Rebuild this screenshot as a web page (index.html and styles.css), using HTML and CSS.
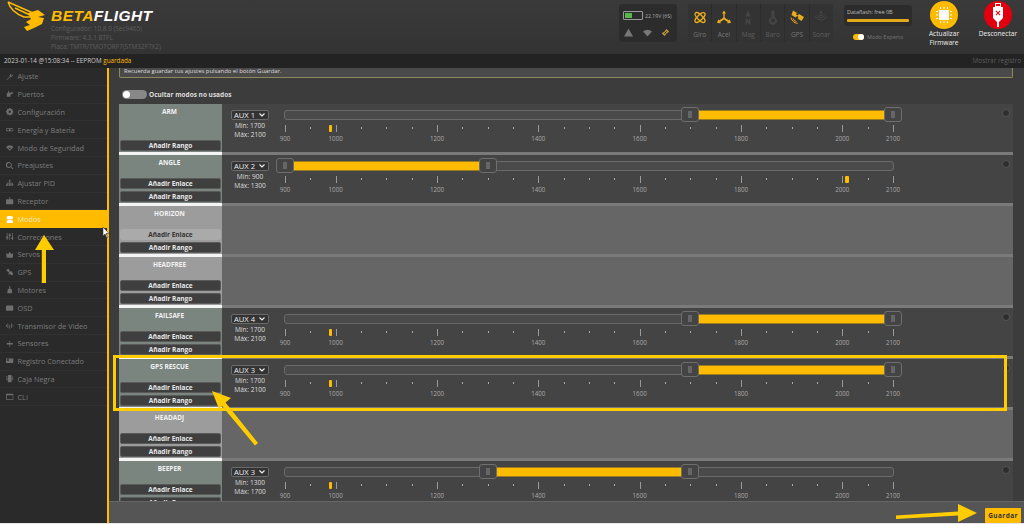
FILE: index.html
```html
<!DOCTYPE html>
<html lang="es">
<head>
  <meta charset="utf-8">
  <title>Betaflight - Modos</title>
  <link rel="stylesheet" href="styles.css">
</head>
<body>

<svg class="defs" width="0" height="0">
  <symbol id="i-wrench" viewBox="0 0 10 10"><path d="M1 9.500 .5 9 5 4.500C4.600 3 5.600 1 8 1L6.600 2.600 7.600 3.600 9.400 2C9.500 4.400 7.400 5.600 5.800 5.200Z"/></symbol>
  <symbol id="i-ports" viewBox="0 0 10 10"><path d="M1 9V5L3 3V1H4V3L6 4 9 2V5L6 6V9Z"/></symbol>
  <symbol id="i-gear" viewBox="0 0 10 10"><path fill-rule="evenodd" d="M4 0H6L6.300 1.500 7.700 .9 9.100 2.300 8.500 3.700 10 4V6L8.500 6.300 9.100 7.700 7.700 9.100 6.300 8.500 6 10H4L3.700 8.500 2.300 9.100.9 7.700 1.500 6.300 0 6V4L1.500 3.700.9 2.300 2.300.9 3.700 1.500ZM5 3.400A1.600 1.600 0 1 0 5 6.600 1.600 1.600 0 1 0 5 3.400Z"/></symbol>
  <symbol id="i-batt" viewBox="0 0 10 10"><path fill-rule="evenodd" d="M1 3H9Q10 3 10 4V6Q10 7 9 7H1Q0 7 0 6V4Q0 3 1 3ZM1 4V6H4V4ZM6 4V6H9V4Z"/></symbol>
  <symbol id="i-para" viewBox="0 0 10 10"><path d="M0 4Q5-1 10 4L5 9ZM3 5 5 7 7 5Z"/></symbol>
  <symbol id="i-preset" viewBox="0 0 10 10"><path fill-rule="evenodd" d="M4 0A4 4 0 0 1 7 6.300L10 9 9 10 6.200 7A4 4 0 1 1 4 0ZM4 1.400A2.600 2.600 0 1 0 4 6.600 2.600 2.600 0 1 0 4 1.400Z"/></symbol>
  <symbol id="i-pid" viewBox="0 0 10 10"><path d="M4 1H6V3H5.500V5H9V7H10V9H7V7H8V6H5.500V7H6.500V9H3.500V7H4.500V6H2V7H3V9H0V7H1V5H4.500V3H4Z"/></symbol>
  <symbol id="i-rx" viewBox="0 0 10 10"><path d="M4.500 0H5.500V3H9Q10 3 10 4V9Q10 10 9 10H1Q0 10 0 9V4Q0 3 1 3H4.500Z"/></symbol>
  <symbol id="i-modes" viewBox="0 0 10 10"><path fill-rule="evenodd" d="M3 0H7A2.300 2.300 0 0 1 7 4.600H3A2.300 2.300 0 0 1 3 0ZM3 5.400H7A2.300 2.300 0 0 1 7 10H3A2.300 2.300 0 0 1 3 5.400Z"/></symbol>
  <symbol id="i-sliders" viewBox="0 0 10 10"><path d="M1 0H2V5H3V7H2V10H1V7H0V5H1ZM4.500 0H5.500V2H6.500V4H5.500V10H4.500V4H3.500V2H4.500ZM8 0H9V6H10V8H9V10H8V8H7V6H8Z"/></symbol>
  <symbol id="i-servo" viewBox="0 0 10 10"><path d="M0 3 3 4 5 1 7 4 10 3 9 9H1Z"/></symbol>
  <symbol id="i-gps" viewBox="0 0 10 10"><path d="M0 3 3 1 5 3 4 5 7 4 10 8 8 10 5 8 3 9 4 6Z"/></symbol>
  <symbol id="i-motor" viewBox="0 0 10 10"><path d="M4.500 0H5.500L6 4H7.500L8.500 10H1.500L2.500 4H4Z"/></symbol>
  <symbol id="i-osd" viewBox="0 0 10 10"><path d="M1 2H9Q10 2 10 3V8Q10 9 9 9H1Q0 9 0 8V3Q0 2 1 2Z"/></symbol>
  <symbol id="i-vtx" viewBox="0 0 10 10"><path d="M4.500 4H5.500V9H4.500ZM2 2H3V8H2ZM7 2H8V8H7ZM0 3.500H1V6.500H0ZM9 3.500H10V6.500H9Z"/></symbol>
  <symbol id="i-sensor" viewBox="0 0 10 10"><path d="M4.500 1H5.500V4H9V6H5.500V9H4.500V6H1V4H4.500Z"/></symbol>
  <symbol id="i-log" viewBox="0 0 10 10"><path fill-rule="evenodd" d="M0 2H10V8H0ZM1 3V5H4V3Z"/></symbol>
  <symbol id="i-box" viewBox="0 0 10 10"><path d="M2.500 0H7.500V10H2.500ZM0 2H2V3H0ZM0 4H2V5H0ZM0 6H2V7H0ZM8 2H10V3H8ZM8 4H10V5H8ZM8 6H10V7H8Z"/></symbol>
  <symbol id="i-cli" viewBox="0 0 10 10"><path fill-rule="evenodd" d="M0 1H10V9H0ZM1 3V8H9V3Z"/></symbol>
</svg>

<header class="topbar">
  <div class="brand">
    <svg class="logo" viewBox="0 0 46 32">
      <path class="wing" d="M1 1 26 12 M1 1Q4 11 17 16L24 16 M8 7 23 14"/>
      <path class="wasp" d="M21 12 31 9 38 14 31 16 37 17 35 23 27 27 20 30 17 26 23 24 19 21 24 18Z"/>
    </svg>
    <div class="brand-text">
      <div class="wordmark"><span>BETA</span>FLIGHT</div>
      <div class="version">Configurador: 10.8.0 (Sec9465)</div>
      <div class="version">Firmware: 4.3.1 BTFL</div>
      <div class="version">Placa: TMTR/TMOTORF7(STM32F7X2)</div>
    </div>
  </div>

  <div class="status">
    <div class="batt-line">
      <div class="batt"><div class="batt-fill"></div></div>
      <span>22.19V (6S)</span>
    </div>
    <div class="status-icons">
      <svg viewBox="0 0 10 10" class="dim"><path d="M5 .5 10 9.500H0Z"/></svg>
      <svg viewBox="0 0 10 10" class="dim"><path d="M0 4Q5 0 10 4L5 9.500Z"/></svg>
      <svg viewBox="0 0 10 10" class="on"><path d="M6 1 9 4 7.500 5.500 6.500 4.500 7 4 6 3 4 5 5 6 4.500 6.500 3 5ZM4 9 1 6 2.500 4.500 3.500 5.500 3 6 4 7 6 5 5 4 5.500 3.500 7 5Z"/></svg>
    </div>
  </div>

  <div class="sensors">
    <div class="sensor on">
      <svg viewBox="0 0 14 14"><g fill="none" stroke="currentColor" stroke-width="1.400"><ellipse cx="7" cy="7" rx="2.600" ry="6.400" transform="rotate(45 7 7)"/><ellipse cx="7" cy="7" rx="2.600" ry="6.400" transform="rotate(-45 7 7)"/></g></svg>
      <span>Giro</span>
    </div>
    <div class="sensor on">
      <svg viewBox="0 0 14 14"><path d="M7 0 9 3H7.700V7.300L12 10 12.700 8.800 14 12.500 10 12.800 10.800 11.500 7 9 3.200 11.500 4 12.800 0 12.500 1.300 8.800 2 10 6.300 7.300V3H5Z"/></svg>
      <span>Acel</span>
    </div>
    <div class="sensor">
      <svg viewBox="0 0 14 14"><path d="M7 0 9.500 6H4.500ZM4.500 8H6L8 11V8H9.500V14H8L6 11V14H4.500Z"/></svg>
      <span>Mag</span>
    </div>
    <div class="sensor">
      <svg viewBox="0 0 14 14"><path fill-rule="evenodd" d="M5.500 0H8.500V6.500A4 4 0 1 1 5.500 6.500ZM7 8A2 2 0 1 0 7 12 2 2 0 1 0 7 8Z"/></svg>
      <span>Baro</span>
    </div>
    <div class="sensor on">
      <svg viewBox="0 0 14 14"><path d="M3 0 7 2.500 6 4 7.500 5 9 3.500 14 6.500 11.500 10.500 7.500 8 8.500 6.500 7 5.500 5.500 7 1.500 4.500Z"/><g fill="none" stroke="currentColor" stroke-width="1"><path d="M1 7Q2 12 7.500 13"/><path d="M3 8Q3.500 10.500 6.500 11"/></g></svg>
      <span>GPS</span>
    </div>
    <div class="sensor">
      <svg viewBox="0 0 14 14"><g fill="none" stroke="currentColor" stroke-width="1.100"><path d="M1 6Q7 13 13 6"/><path d="M3 5Q7 9.500 11 5"/><path d="M5 4Q7 6 9 4"/></g><circle cx="7" cy="2" r="1.200"/></svg>
      <span>Sonar</span>
    </div>
  </div>

  <div class="flash-col">
    <div class="flash">
      <div>Dataflash: free 0B</div>
      <div class="flash-bar"></div>
    </div>
    <div class="expert"><span class="mini-toggle"></span>Modo Experto</div>
  </div>

  <div class="action">
    <div class="action-icon yellow">
      <svg viewBox="0 0 16 16"><path d="M3 3H13V13H3ZM4 0H5V2H4ZM7.500 0H8.500V2H7.500ZM11 0H12V2H11ZM4 14H5V16H4ZM7.500 14H8.500V16H7.500ZM11 14H12V16H11ZM0 4H2V5H0ZM0 7.500H2V8.500H0ZM0 11H2V12H0ZM14 4H16V5H14ZM14 7.500H16V8.500H14ZM14 11H16V12H14Z"/></svg>
    </div>
    <span>Actualizar<br>Firmware</span>
  </div>
  <div class="action">
    <div class="action-icon red">
      <svg viewBox="0 0 12 24"><path fill-rule="evenodd" d="M3 0H9V4H11V15L7 19V24H5V19L1 15V4H3ZM4 1V3H8V1ZM4.200 7.500 3.500 8.200 5.300 10 3.500 11.800 4.200 12.500 6 10.700 7.800 12.500 8.500 11.800 6.700 10 8.500 8.200 7.800 7.500 6 9.300Z"/></svg>
    </div>
    <span>Desconectar</span>
  </div>
</header>

<div class="logbar">
  <div>2023-01-14 @15:08:34 -- EEPROM <span class="saved">guardada</span></div>
  <div class="showlog">Mostrar registro</div>
</div>

<div class="main">
  <nav class="sidebar" id="sidebar"></nav>

  <section class="content">
    <div class="scroll">
      <div class="note">Recuerda guardar tus ajustes pulsando el botón Guardar.</div>
      <div class="hide-unused"><span class="toggle"></span>Ocultar modos no usados</div>
      <div class="modes" id="modes"></div>
    </div>
    <footer class="toolbar"><a class="save">Guardar</a></footer>
  </section>
</div>

<div class="mark-box"></div>
<svg class="marks" width="1024" height="524" viewBox="0 0 1024 524">
  <path class="cursor" d="M103 227V236L105 234 107 238 108 237 106 233.500 109 233.500Z"/>
  <path d="M41.800 283V250H35L44 235 54 250H46V283Z"/>
  <path d="M212 391 231 398 225.500 402.500 258 443 255 445.500 222 406 219 409Z"/>
  <path d="M896 515.500 958 511.500V504L977 513 958 522V515.500L896 519Z"/>
</svg>

<script src="script.js"></script>
</body>
</html>
```

FILE: styles.css
```css
* {
  box-sizing: border-box;
}

html, body {
  margin: 0;
  height: 524px;
  overflow: hidden;
}

body {
  position: relative;
  display: flex;
  flex-direction: column;
  background: #2a2a2a;
  font-family: "Open Sans", sans-serif;
  border-bottom: 1px solid #e8e8e8;
}

.defs {
  position: absolute;
}

/* header */

.topbar {
  height: 54px;
  flex: none;
  display: flex;
  background: linear-gradient(#3a3a3a, #333);
}

.brand {
  display: flex;
  width: 619px;
  flex: none;
  padding: 1px 0 0 7px;
}

.logo {
  width: 46px;
  height: 32px;
  flex: none;
}

.wing {
  fill: none;
  stroke: #ffbb00;
  stroke-width: 1.400;
}

.wasp {
  fill: #ffbb00;
}

.brand-text {
  padding-top: 7px;
  margin-left: -2px;
}

.wordmark {
  font-family: "Liberation Sans", sans-serif;
  font-weight: bold;
  font-style: italic;
  font-size: 15.500px;
  line-height: 16px;
  letter-spacing: .45px;
  color: #fff;
}

.wordmark span {
  color: #ffbb00;
}

.version {
  font-size: 6.400px;
  line-height: 9px;
  color: #5e5e5e;
}

.status {
  width: 58px;
  height: 38px;
  flex: none;
  margin: 4px 11px 0 0;
  padding: 7px 4px 0;
  background: #2c2c2c;
  border-radius: 3px;
  color: #aaa;
}

.batt-line {
  display: flex;
  align-items: center;
  gap: 2px;
  font-size: 5.200px;
  white-space: nowrap;
}

.batt {
  width: 20px;
  height: 9px;
  flex: none;
  padding: 1px;
  border: 1px solid #999;
  border-radius: 1px;
}

.batt-fill {
  width: 7px;
  height: 100%;
  background: #54b948;
}

.status-icons {
  display: flex;
  justify-content: space-between;
  margin-top: 8px;
  padding: 0 3px 0 1px;
}

.status-icons svg {
  width: 9px;
  height: 9px;
}

.dim {
  fill: #777;
}

.on {
  fill: #c9a13a;
}

.sensors {
  display: flex;
  flex: none;
  gap: 1px;
  width: 145px;
  height: 38px;
  margin: 4px 11px 0 0;
  background: #2c2c2c;
  border-radius: 3px;
  overflow: hidden;
}

.sensor {
  flex: 1;
  display: flex;
  flex-direction: column;
  align-items: center;
  padding-top: 6px;
  background: #333;
  color: #454545;
  font-size: 6.500px;
  line-height: 9px;
}

.sensor svg {
  width: 14px;
  height: 15px;
  margin-bottom: 5px;
  fill: currentColor;
}

.sensor span {
  color: #5e5e5e;
}

.sensor.on {
  color: #e8ac1c;
}

.sensor.on span {
  color: #777;
}

.flash-col {
  width: 68px;
  flex: none;
  margin: 5px 5px 0 0;
}

.flash {
  height: 21px;
  padding: 3px 3px 0;
  background: #2c2c2c;
  border-radius: 3px;
  font-size: 5.500px;
  line-height: 8px;
  color: #bbb;
}

.flash-bar {
  height: 3px;
  margin-top: 3px;
  background: #e0aa1a;
  border-radius: 1px;
}

.expert {
  display: flex;
  align-items: center;
  gap: 3px;
  margin: 7px 0 0 9px;
  font-size: 5.500px;
  color: #777;
}

.mini-toggle {
  width: 11px;
  height: 6px;
  border-radius: 3px;
  background: #ffbb00;
  position: relative;
}

.mini-toggle::after {
  content: "";
  position: absolute;
  right: 0;
  top: 0;
  width: 6px;
  height: 6px;
  border-radius: 50%;
  background: #fff;
}

.action {
  width: 54px;
  flex: none;
  display: flex;
  flex-direction: column;
  align-items: center;
  padding-top: 1px;
  color: #eee;
  font-size: 6.600px;
  line-height: 9px;
  text-align: center;
}

.action-icon {
  width: 28px;
  height: 28px;
  border-radius: 50%;
  display: flex;
  align-items: center;
  justify-content: center;
  fill: #fff;
}

.yellow {
  background: #ffbb00;
}

.yellow svg {
  width: 16px;
  height: 16px;
}

.red {
  background: #e2000f;
}

.red svg {
  width: 12px;
  height: 24px;
}

.logbar {
  height: 14px;
  flex: none;
  display: flex;
  justify-content: space-between;
  padding: 0 3px 0 4px;
  background: #232323;
  color: #ccc;
  font-size: 6.300px;
  line-height: 14px;
}

.saved {
  color: #ffbb00;
}

.showlog {
  color: #5c5c5c;
  font-size: 6.400px;
}

/* sidebar */

.main {
  flex: 1;
  min-height: 0;
  display: flex;
}

.sidebar {
  width: 109px;
  flex: none;
  background: #2a2a2a;
  border-right: 2px solid #ffbb00;
}

.nav-item {
  height: 17.800px;
  display: flex;
  align-items: center;
  gap: 4px;
  padding-left: 6px;
  border-bottom: 1px solid #313131;
  color: #7c7c7c;
  font-size: 7.300px;
  fill: #6e6e6e;
}

.nav-item svg {
  width: 7.500px;
  height: 7.500px;
  flex: none;
}

.nav-item.active {
  background: #ffbb00;
  color: #f3e6c0;
  fill: #fff;
  border-bottom: 0;
}

/* content */

.content {
  flex: 1;
  min-width: 0;
  display: flex;
  flex-direction: column;
  background: #3c3c3c;
}

.scroll {
  flex: 1;
  min-height: 0;
  overflow: hidden;
  padding: 0 11px 0 10px;
}

.note {
  height: 9.500px;
  margin-bottom: 12px;
  padding-left: 4px;
  background: #4a4a4a;
  border: 1px solid #8c8a5a;
  border-top: 0;
  border-radius: 0 0 2px 2px;
  color: #ddd;
  font-size: 5.900px;
  line-height: 7px;
}

.hide-unused {
  display: flex;
  align-items: center;
  gap: 2px;
  height: 14.500px;
  padding: 0 0 4px 3px;
  color: #ddd;
  font-size: 6.500px;
  font-weight: bold;
}

.toggle {
  position: relative;
  width: 25px;
  height: 9px;
  border-radius: 5px;
  background: #888;
}

.toggle::after {
  content: "";
  position: absolute;
  left: 1px;
  top: 1px;
  width: 7px;
  height: 7px;
  border-radius: 50%;
  background: #fff;
}

/* mode rows */

.mode {
  display: flex;
  height: 51.050px;
}

.mode-left {
  width: 103px;
  flex: none;
  position: relative;
  display: flex;
  flex-direction: column;
  justify-content: flex-end;
  gap: 2px;
  padding: 0 1px 1px;
  background: #7a8580;
  border-bottom: 3px solid #f4f4f4;
}

.mode-name {
  position: absolute;
  top: 3px;
  left: 0;
  right: 2px;
  text-align: center;
  color: #f2f2f2;
  font-size: 6.500px;
  line-height: 9px;
  font-weight: bold;
}

.add {
  height: 11px;
  background: #3f3f3f;
  border: 1px solid #5a5a5a;
  border-radius: 2px;
  text-align: center;
  color: #e8e8e8;
  font-size: 6.500px;
  line-height: 9px;
  font-weight: bold;
}

.add.hover {
  background: #aaa;
  border-color: #aaa;
  color: #333;
}

.mode-right {
  flex: 1;
  position: relative;
  display: flex;
  padding: 6px 0 0 9px;
  background: #444;
  border-bottom: 3px solid #7a7a7a;
}

.mode.unused .mode-left {
  background: #9c9c9c;
}

.mode.unused .mode-right {
  background: #666;
}

.channel {
  width: 38px;
  flex: none;
  text-align: center;
  color: #ddd;
  font-size: 6.600px;
  line-height: 8.500px;
}

.select {
  display: flex;
  align-items: center;
  justify-content: space-between;
  height: 10px;
  padding: 0 3px 0 2px;
  margin-bottom: 2px;
  background: #333;
  border: 1px solid #6a6a6a;
  border-radius: 2px;
  color: #eee;
  font-size: 7.600px;
  line-height: 8px;
}

.select svg {
  width: 6px;
  height: 4px;
  fill: none;
  stroke: #eee;
  stroke-width: 1.200;
}

.slider {
  position: relative;
  width: 608px;
  margin-left: 16px;
}

.track {
  height: 9.500px;
  margin: 0 -1px;
  background: #4a4a4a;
  border: 1px solid #6a6a6a;
  border-radius: 3px;
}

.range {
  position: absolute;
  top: 0;
  height: 9.500px;
  background: #ffbb00;
  border-top: 1px solid #9a7c20;
  border-bottom: 1px solid #9a7c20;
}

.handle {
  position: absolute;
  top: -3px;
  width: 18px;
  height: 15px;
  margin-left: -9px;
  background: #444;
  border: 1px solid #6e6e6e;
  border-radius: 3px;
}

.handle::after {
  content: "";
  position: absolute;
  left: 6px;
  top: 3px;
  width: 4px;
  height: 7px;
  background: #666;
}

.tick {
  position: absolute;
  top: 17px;
  width: 1px;
  height: 1.500px;
  background: #aaa;
}

.tick.big {
  top: 15px;
  height: 7px;
  background: #999;
}

.pip-label {
  position: absolute;
  top: 24.500px;
  width: 30px;
  margin-left: -15px;
  text-align: center;
  color: #aaa;
  font-size: 6.200px;
  line-height: 8px;
}

.marker {
  position: absolute;
  top: 15px;
  width: 3.500px;
  height: 7px;
  margin-left: -2px;
  background: #ffbb00;
  border-radius: 1px;
}

.remove {
  position: absolute;
  right: 3px;
  top: 5px;
  width: 8px;
  height: 8px;
  border-radius: 50%;
  background: #2e2e2e;
  border: 1px solid #555;
}

/* footer */

.toolbar {
  height: 22px;
  flex: none;
  display: flex;
  justify-content: flex-end;
  align-items: flex-end;
  padding: 0 3px 0 0;
  background: #555;
  border-top: 1px solid #666;
}

.save {
  width: 36px;
  height: 15px;
  background: #ffbb00;
  border-radius: 1px;
  text-align: center;
  color: #333;
  font-size: 6.500px;
  line-height: 15px;
  letter-spacing: .4px;
  font-weight: bold;
}

/* annotations drawn on top of the screenshot */

.mark-box {
  position: absolute;
  left: 113px;
  top: 355px;
  width: 894px;
  height: 56px;
  border: 3px solid #ffcc00;
}

.marks {
  position: absolute;
  left: 0;
  top: 0;
  fill: #ffcc00;
  pointer-events: none;
}

.marks .cursor {
  fill: #fff;
  stroke: #222;
  stroke-width: .5;
}
```

FILE: script.js
```js
var navItems = [
  ["i-wrench", "Ajuste"], ["i-ports", "Puertos"], ["i-gear", "Configuración"],
  ["i-batt", "Energía y Batería"], ["i-para", "Modo de Seguridad"], ["i-preset", "Preajustes"],
  ["i-pid", "Ajustar PID"], ["i-rx", "Receptor"], ["i-modes", "Modos"],
  ["i-sliders", "Correcciones"], ["i-servo", "Servos"], ["i-gps", "GPS"],
  ["i-motor", "Motores"], ["i-osd", "OSD"], ["i-vtx", "Transmisor de Video"],
  ["i-sensor", "Sensores"], ["i-log", "Registro Conectado"], ["i-box", "Caja Negra"],
  ["i-cli", "CLI"]
];

// name, aux channel, min, max, marker value; no channel means an unused mode
var modes = [
  { name: "ARM", aux: 1, min: 1700, max: 2100, mark: 990 },
  { name: "ANGLE", aux: 2, min: 900, max: 1300, mark: 2010, link: true },
  { name: "HORIZON", link: true, hover: true },
  { name: "HEADFREE", link: true },
  { name: "FAILSAFE", aux: 4, min: 1700, max: 2100, mark: 990, link: true },
  { name: "GPS RESCUE", aux: 3, min: 1700, max: 2100, mark: 990, link: true },
  { name: "HEADADJ", link: true },
  { name: "BEEPER", aux: 3, min: 1300, max: 1700, mark: 990, link: true }
];

var labels = [900, 1000, 1200, 1400, 1600, 1800, 2000, 2100];

function pos(value) {
  return (value - 900) / 12 + "%";
}

function navHtml() {
  return navItems.map(function (item) {
    var cls = item[1] == "Modos" ? "nav-item active" : "nav-item";
    return '<a class="' + cls + '"><svg><use href="#' + item[0] + '"/></svg>' + item[1] + "</a>";
  }).join("");
}

function pipsHtml() {
  var html = "";
  for (var v = 900; v <= 2100; v += 50) {
    var big = labels.indexOf(v) != -1;
    html += '<div class="tick' + (big ? " big" : "") + '" style="left:' + pos(v) + '"></div>';
    if (big) {
      html += '<div class="pip-label" style="left:' + pos(v) + '">' + v + "</div>";
    }
  }
  return html;
}

function rightHtml(m) {
  if (!m.aux) {
    return '<div class="mode-right"></div>';
  }
  return '<div class="mode-right">' +
    '<div class="channel"><div class="select">AUX ' + m.aux +
    '<svg viewBox="0 0 6 4"><path d="M.5.5 3 3 5.500.5"/></svg></div>' +
    "Mín: " + m.min + "<br>Máx: " + m.max + "</div>" +
    '<div class="slider"><div class="track"></div>' +
    '<div class="range" style="left:' + pos(m.min) + ";width:" + (m.max - m.min) / 12 + '%"></div>' +
    '<div class="handle" style="left:' + pos(m.min) + '"></div>' +
    '<div class="handle" style="left:' + pos(m.max) + '"></div>' +
    pipsHtml() +
    '<div class="marker" style="left:' + pos(m.mark) + '"></div></div>' +
    '<div class="remove"></div></div>';
}

function modeHtml(m) {
  var html = '<div class="mode' + (m.aux ? "" : " unused") + '"><div class="mode-left">' +
    '<div class="mode-name">' + m.name + "</div>";
  if (m.link) {
    html += '<div class="add' + (m.hover ? " hover" : "") + '">Añadir Enlace</div>';
  }
  html += '<div class="add">Añadir Rango</div></div>';
  return html + rightHtml(m) + "</div>";
}

document.getElementById("sidebar").innerHTML = navHtml();
document.getElementById("modes").innerHTML = modes.map(modeHtml).join("");
```
